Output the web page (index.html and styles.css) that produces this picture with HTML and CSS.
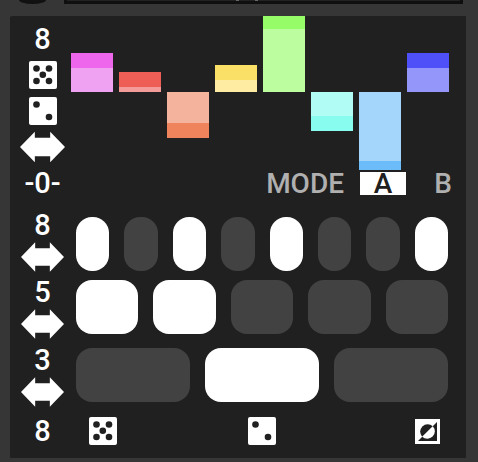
FILE: index.html
```html
<!DOCTYPE html>
<html lang="en">
<head>
  <meta charset="UTF-8">
  <meta name="viewport" content="width=device-width, initial-scale=1.0">
  <title>Sequencer</title>
  <link rel="stylesheet" href="styles.css">
</head>
<body>
  <!-- shared shapes -->
  <svg width="0" height="0" class="defs" aria-hidden="true">
    <symbol id="dice5" viewBox="0 0 28 28">
      <rect width="28" height="28" rx="2" fill="#fff"/>
      <g fill="#202020">
        <circle cx="7.5" cy="7.5" r="3.3"/><circle cx="20" cy="7.5" r="3.3"/>
        <circle cx="13.8" cy="13.8" r="3.3"/>
        <circle cx="7.5" cy="20" r="3.3"/><circle cx="20" cy="20" r="3.3"/>
      </g>
    </symbol>
    <symbol id="dice2" viewBox="0 0 28 28">
      <rect width="28" height="28" rx="2" fill="#fff"/>
      <g fill="#202020"><circle cx="7.5" cy="7.5" r="3.3"/><circle cx="20" cy="20" r="3.3"/></g>
    </symbol>
    <symbol id="arrows" viewBox="0 0 44 30">
      <path fill="#fff" d="M0 15 14.5 0V6H29.5V0L44 15 29.5 30V24H14.5V30Z"/>
    </symbol>
    <symbol id="invert" viewBox="0 0 25 25">
      <rect width="25" height="25" fill="#fff"/>
      <path fill="#202020" d="M22 3V22H3Z"/>
      <path fill="#202020" d="M7.2 17.8A7.5 7.5 0 0 1 17.8 7.2Z"/>
      <path fill="#fff" d="M7.2 17.8A7.5 7.5 0 0 0 17.8 7.2Z"/>
    </symbol>
  </svg>

  <header class="topbar">
    <span class="knob"></span>
    <div class="display"><i></i><i></i></div>
  </header>

  <main class="panel">
    <section class="row">
      <div class="side side-top">
        <span class="value">8</span>
        <button type="button" class="icon" aria-label="Randomize all"><svg class="dice"><use href="#dice5"/></svg></button>
        <button type="button" class="icon" aria-label="Randomize some"><svg class="dice"><use href="#dice2"/></svg></button>
        <button type="button" class="icon" aria-label="Shift values"><svg class="arrows"><use href="#arrows"/></svg></button>
        <span class="value">-0-</span>
      </div>
      <div class="main">
        <div class="chart">
          <div class="bar up pink"></div>
          <div class="bar up red"></div>
          <div class="bar down orange"></div>
          <div class="bar up yellow"></div>
          <div class="bar up green"></div>
          <div class="bar down aqua"></div>
          <div class="bar down sky"></div>
          <div class="bar up blue"></div>
        </div>
        <div class="modes">
          <span class="mode-label">MODE</span>
          <button type="button" class="mode active" aria-pressed="true">A</button>
          <button type="button" class="mode" aria-pressed="false">B</button>
        </div>
      </div>
    </section>

    <section class="row steps steps-8">
      <div class="side">
        <span class="value">8</span>
        <button type="button" class="icon" aria-label="Rotate 8 steps"><svg class="arrows"><use href="#arrows"/></svg></button>
      </div>
      <div class="pads">
        <button type="button" class="pad on" aria-label="Step 1"></button>
        <button type="button" class="pad" aria-label="Step 2"></button>
        <button type="button" class="pad on" aria-label="Step 3"></button>
        <button type="button" class="pad" aria-label="Step 4"></button>
        <button type="button" class="pad on" aria-label="Step 5"></button>
        <button type="button" class="pad" aria-label="Step 6"></button>
        <button type="button" class="pad" aria-label="Step 7"></button>
        <button type="button" class="pad on" aria-label="Step 8"></button>
      </div>
    </section>

    <section class="row steps steps-5">
      <div class="side">
        <span class="value">5</span>
        <button type="button" class="icon" aria-label="Rotate 5 steps"><svg class="arrows"><use href="#arrows"/></svg></button>
      </div>
      <div class="pads">
        <button type="button" class="pad on" aria-label="Step 1"></button>
        <button type="button" class="pad on" aria-label="Step 2"></button>
        <button type="button" class="pad" aria-label="Step 3"></button>
        <button type="button" class="pad" aria-label="Step 4"></button>
        <button type="button" class="pad" aria-label="Step 5"></button>
      </div>
    </section>

    <section class="row steps">
      <div class="side">
        <span class="value">3</span>
        <button type="button" class="icon" aria-label="Rotate 3 steps"><svg class="arrows"><use href="#arrows"/></svg></button>
      </div>
      <div class="pads">
        <button type="button" class="pad" aria-label="Step 1"></button>
        <button type="button" class="pad on" aria-label="Step 2"></button>
        <button type="button" class="pad" aria-label="Step 3"></button>
      </div>
    </section>

    <section class="row bottom">
      <div class="side"><span class="value">8</span></div>
      <div class="tools">
        <button type="button" class="icon" aria-label="Randomize all steps"><svg class="dice"><use href="#dice5"/></svg></button>
        <button type="button" class="icon" aria-label="Randomize some steps"><svg class="dice"><use href="#dice2"/></svg></button>
        <button type="button" class="icon" aria-label="Invert steps"><svg class="invert"><use href="#invert"/></svg></button>
      </div>
    </section>
  </main>
</body>
</html>
```
FILE: styles.css
```css
* {
  box-sizing: border-box;
}

body {
  margin: 0;
  background: #363636;
  color: #fff;
  font-family: Roboto, sans-serif;
  font-size: 29px;
  font-weight: 500;
  line-height: 28px;
}

button {
  border: none;
  padding: 0;
  background: none;
  color: inherit;
  font: inherit;
  cursor: pointer;
}

svg {
  display: block;
}

.defs {
  position: absolute;
}

/* bottom edge of the module above */
.topbar {
  display: flex;
  align-items: flex-end;
  gap: 18px;
  height: 4px;
  padding: 0 15px 0 19px;
  overflow: hidden;
}

.knob {
  width: 27px;
  height: 4px;
  background: #111;
  border-radius: 0 0 50% 50% / 0 0 100% 100%;
}

.display {
  flex: 1;
  display: flex;
  justify-content: center;
  gap: 16px;
  height: 4px;
  padding-right: 34px;
  background: #222;
  border: 3px solid #0f0f0f;
  border-top: none;
}

.display i {
  width: 3px;
  height: 1px;
  background: #666;
}

.panel {
  margin: 12px 12px 4px 10px;
  padding: 0 17px 13px 0;
  background: #202020;
  border-radius: 2px 0 0 0;
}

.row {
  display: grid;
  grid-template-columns: 61px 1fr;
}

.side {
  display: flex;
  flex-direction: column;
  align-items: center;
  gap: 4px;
  padding-left: 4px;
}

.side-top {
  gap: 8px;
  padding-top: 9px;
}

.value {
  height: 28px;
}

.icon {
  display: flex;
  align-items: center;
  justify-content: center;
  height: 28px;
}

.dice {
  width: 28px;
  height: 28px;
}

.arrows {
  width: 43px;
  height: 30px;
}

.side-top .arrows {
  width: 45px;
  height: 32px;
}

.invert {
  width: 25px;
  height: 25px;
}

/* bars grow up or down from the zero line */
.chart {
  display: grid;
  grid-template-columns: repeat(8, 1fr);
  gap: 6px;
  height: 154px;
}

.bar.up {
  align-self: end;
  margin-bottom: 78px;
  border-top: 15px solid;
}

.bar.down {
  margin-top: 76px;
  align-self: start;
  border-bottom: 15px solid;
}

.bar.pink { height: 39px; background: #f0a2f2; border-color: #ed66ec; }
.bar.red { height: 20px; background: #f29b98; border-color: #ef5d57; }
.bar.orange { height: 46px; background: #f4b39c; border-color: #ef835c; }
.bar.yellow { height: 27px; background: #fdeca2; border-color: #fbe067; }
.bar.green { height: 76px; background: #bcfd9f; border-color: #96fc68; border-top-width: 13px; }
.bar.aqua { height: 39px; background: #b1fdf6; border-color: #88fdef; }
.bar.sky { height: 78px; background: #a4d5fa; border-color: #6cbcfa; border-bottom-width: 9px; }
.bar.blue { height: 39px; background: #9596f9; border-color: #5050f8; }

.modes {
  display: flex;
  align-items: center;
  justify-content: flex-end;
  gap: 14px;
  height: 23px;
  margin: 2px -17px 0 0;
  color: #b0b0b0;
  font-size: 28px;
}

.mode-label {
  margin-right: 2px;
}

.mode {
  width: 46px;
  height: 23px;
  line-height: 24px;
}

.mode.active {
  background: #fff;
  color: #202020;
}

.steps {
  margin-top: 8px;
}

.steps-8 {
  margin-top: 14px;
}

.steps-8 .pads {
  padding-top: 6px;
}

.steps-5 {
  margin-top: 7px;
}

.pads {
  display: flex;
  gap: 15px;
  padding: 2px 1px 0 5px;
}

.pad {
  flex: 1;
  height: 54px;
  background: #424242;
  border-radius: 16px;
}

.pad.on {
  background: #fff;
}

.bottom {
  margin-top: 11px;
}

.tools {
  display: grid;
  grid-template-columns: 1fr auto 1fr;
  align-items: center;
  padding: 0 1px 0 5px;
}

.tools .icon:first-child {
  justify-self: start;
  margin-left: 13px;
}

.tools .icon:last-child {
  justify-self: end;
  margin-right: 8px;
}
```
